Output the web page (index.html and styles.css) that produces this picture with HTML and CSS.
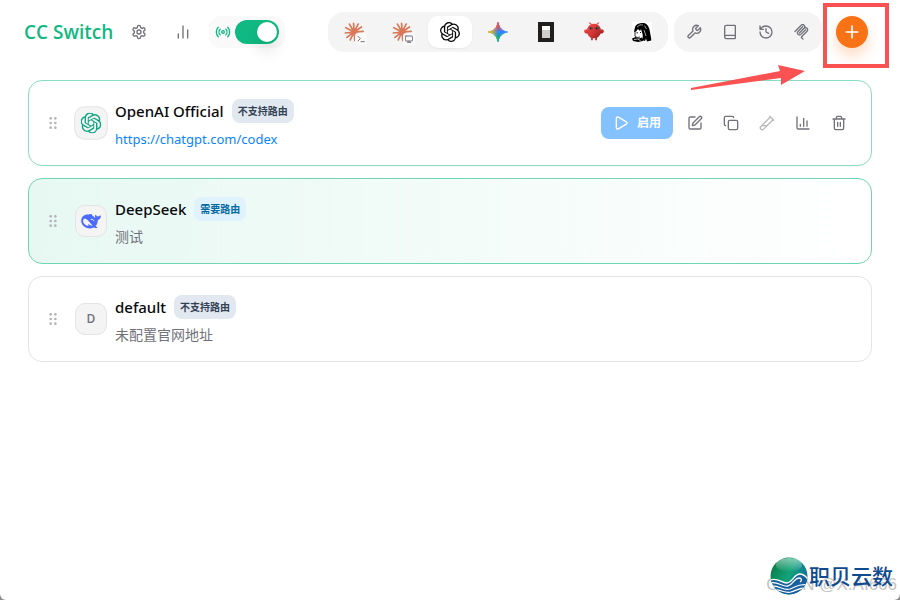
FILE: index.html
```html
<!DOCTYPE html>
<html lang="zh-CN">
<head>
<meta charset="utf-8">
<meta name="viewport" content="width=device-width, initial-scale=1">
<title>CC Switch</title>
<link rel="stylesheet" href="styles.css">
</head>
<body>
<svg class="sprite" aria-hidden="true">
  <symbol id="openai" viewBox="0 0 24 24"><path fill="currentColor" d="M22.2819 9.8211a5.9847 5.9847 0 0 0-.5157-4.9108 6.0462 6.0462 0 0 0-6.5098-2.9A6.0651 6.0651 0 0 0 4.9807 4.1818a5.9847 5.9847 0 0 0-3.9977 2.9 6.0462 6.0462 0 0 0 .7427 7.0966 5.98 5.98 0 0 0 .511 4.9107 6.051 6.051 0 0 0 6.5146 2.9001A5.9847 5.9847 0 0 0 13.2599 24a6.0557 6.0557 0 0 0 5.7718-4.2058 5.9894 5.9894 0 0 0 3.9977-2.9001 6.0557 6.0557 0 0 0-.7475-7.0729zm-9.022 12.6081a4.4755 4.4755 0 0 1-2.8764-1.0408l.1419-.0804 4.7783-2.7582a.7948.7948 0 0 0 .3927-.6813v-6.7369l2.02 1.1686a.071.071 0 0 1 .038.052v5.5826a4.504 4.504 0 0 1-4.4945 4.4944zm-9.6607-4.1254a4.4708 4.4708 0 0 1-.5346-3.0137l.142.0852 4.783 2.7582a.7712.7712 0 0 0 .7806 0l5.8428-3.3685v2.3324a.0804.0804 0 0 1-.0332.0615L9.74 19.9502a4.4992 4.4992 0 0 1-6.1408-1.6464zM2.3408 7.8956a4.485 4.485 0 0 1 2.3655-1.9728V11.6a.7664.7664 0 0 0 .3879.6765l5.8144 3.3543-2.0201 1.1685a.0757.0757 0 0 1-.071 0l-4.8303-2.7865A4.504 4.504 0 0 1 2.3408 7.872zm16.5963 3.8558L13.1038 8.364 15.1192 7.2a.0757.0757 0 0 1 .071 0l4.8303 2.7913a4.4944 4.4944 0 0 1-.6765 8.1042v-5.6772a.79.79 0 0 0-.407-.667zm2.0107-3.0231l-.142-.0852-4.7735-2.7818a.7759.7759 0 0 0-.7854 0L9.409 9.2297V6.8974a.0662.0662 0 0 1 .0284-.0615l4.8303-2.7866a4.4992 4.4992 0 0 1 6.6802 4.66zM8.3065 12.863l-2.02-1.1638a.0804.0804 0 0 1-.038-.0567V6.0742a4.4992 4.4992 0 0 1 7.3757-3.4537l-.142.0805L8.704 5.459a.7948.7948 0 0 0-.3927.6813zm1.0976-2.3654l2.602-1.4998 2.6069 1.4998v2.9994l-2.5974 1.4997-2.6067-1.4997Z"/></symbol>
  <symbol id="burst" viewBox="0 0 24 24"><path fill="none" stroke="#d97757" stroke-width="2" stroke-linecap="round" d="M12 12 11.500 1.500M12 12 17 2.500M12 12 21 6M12 12 23 11.200M12 12 22 16M12 12 18.500 20M12 12 13 22.500M12 12 7.500 21.500M12 12 3.500 18.500M12 12 1.500 13.200M12 12 2.200 6.800M12 12 6.500 2.500"/><circle cx="12" cy="12" r="3.800" fill="#d97757"/></symbol>
  <symbol id="grip" viewBox="0 0 24 24"><g fill="currentColor"><circle cx="8.500" cy="5" r="2"/><circle cx="8.500" cy="12" r="2"/><circle cx="8.500" cy="19" r="2"/><circle cx="15.500" cy="5" r="2"/><circle cx="15.500" cy="12" r="2"/><circle cx="15.500" cy="19" r="2"/></g></symbol>
</svg>
<div class="window">
  <header class="topbar">
    <div class="brand">
      <h1>CC Switch</h1>
      <button class="icon-btn settings" aria-label="设置"><svg class="line" viewBox="0 0 24 24"><path d="M12.22 2h-.44a2 2 0 0 0-2 2v.18a2 2 0 0 1-1 1.73l-.43.25a2 2 0 0 1-2 0l-.15-.08a2 2 0 0 0-2.73.73l-.22.38a2 2 0 0 0 .73 2.73l.15.1a2 2 0 0 1 1 1.72v.51a2 2 0 0 1-1 1.74l-.15.09a2 2 0 0 0-.73 2.73l.22.38a2 2 0 0 0 2.73.73l.15-.08a2 2 0 0 1 2 0l.43.25a2 2 0 0 1 1 1.73V20a2 2 0 0 0 2 2h.44a2 2 0 0 0 2-2v-.18a2 2 0 0 1 1-1.73l.43-.25a2 2 0 0 1 2 0l.15.08a2 2 0 0 0 2.73-.73l.22-.39a2 2 0 0 0-.73-2.73l-.15-.08a2 2 0 0 1-1-1.74v-.5a2 2 0 0 1 1-1.74l.15-.09a2 2 0 0 0 .73-2.73l-.22-.38a2 2 0 0 0-2.73-.73l-.15.08a2 2 0 0 1-2 0l-.43-.25a2 2 0 0 1-1-1.73V4a2 2 0 0 0-2-2z"/><circle cx="12" cy="12" r="3"/></svg></button>
      <button class="icon-btn" aria-label="统计"><svg class="line" viewBox="0 0 24 24"><path d="M5 21v-6M12 21V3M19 21V9"/></svg></button>
      <label class="proxy">
        <svg class="line" viewBox="0 0 24 24"><path d="M16.247 7.761a6 6 0 0 1 0 8.478M19.075 4.933a10 10 0 0 1 0 14.134M4.925 19.067a10 10 0 0 1 0-14.134M7.753 16.239a6 6 0 0 1 0-8.478"/><circle cx="12" cy="12" r="2"/></svg>
        <input type="checkbox" role="switch" aria-label="代理" checked>
      </label>
    </div>
    <div class="actions">
      <nav class="group apps">
        <button class="app" aria-label="Claude Code"><svg viewBox="0 0 24 24"><use href="#burst"/></svg><svg class="mini line" viewBox="0 0 24 24"><path d="m3 18 7-7-7-7M12 20h10"/></svg></button>
        <button class="app" aria-label="Claude Desktop"><svg viewBox="0 0 24 24"><use href="#burst"/></svg><svg class="mini line" viewBox="0 0 24 24"><rect x="1" y="3" width="22" height="15" rx="2"/><path d="M7 22h10M12 18v4"/></svg></button>
        <button class="app active" aria-label="Codex"><svg viewBox="0 0 24 24"><use href="#openai"/></svg></button>
        <button class="app" aria-label="Gemini"><svg viewBox="0 0 24 24">
          <defs>
            <linearGradient id="gem-y" x1="0" y1="0" x2=".5" y2="0"><stop offset=".15" stop-color="#fabc12"/><stop offset="1" stop-color="#fabc12" stop-opacity="0"/></linearGradient>
            <linearGradient id="gem-r" x1=".5" y1="0" x2=".55" y2=".5"><stop offset=".3" stop-color="#f94543"/><stop offset="1" stop-color="#f94543" stop-opacity="0"/></linearGradient>
            <linearGradient id="gem-g" x1=".5" y1="1" x2=".55" y2=".5"><stop offset=".2" stop-color="#08b962"/><stop offset="1" stop-color="#08b962" stop-opacity="0"/></linearGradient>
            <path id="spark" d="M12 .5C13.200 7 17 10.800 23.500 12 17 13.200 13.200 17 12 23.500 10.800 17 7 13.200.5 12 7 10.800 10.800 7 12 .5z"/>
          </defs>
          <use href="#spark" fill="#3186ff" stroke="#3186ff"/>
          <use href="#spark" fill="url(#gem-g)" stroke="url(#gem-g)"/>
          <use href="#spark" fill="url(#gem-r)" stroke="url(#gem-r)"/>
          <use href="#spark" fill="url(#gem-y)" stroke="url(#gem-y)"/>
        </svg></button>
        <button class="app" aria-label="OpenCode"><svg viewBox="0 0 20 20"><path fill="#211e1e" d="M2 0h16v20H2z"/><path fill="#fff" d="M6 4h8v4H6z"/><path fill="#cfcecd" d="M6 8h8v8H6z"/></svg></button>
        <button class="app" aria-label="OpenClaw"><svg viewBox="0 0 24 24">
          <defs><linearGradient id="claw" x1="0" y1="0" x2="1" y2="1"><stop stop-color="#ff4d4d"/><stop offset="1" stop-color="#991b1b"/></linearGradient></defs>
          <g fill="url(#claw)"><path d="M12 2c-5.500 0-8.500 4.500-8.500 8.500 0 4 2.500 7.500 5 8.500v3h2v-2.500h3V22h2v-3c2.500-1 5-4.500 5-8.500C20.500 6.500 17.500 2 12 2z"/><path d="M5 9.500c-2.500-1.500-5-.5-4.800 1.800.3 2.400 3.300 3.200 5.300 1.700zM19 9.500c2.500-1.500 5-.5 4.800 1.800-.3 2.400-3.300 3.200-5.300 1.700z"/></g>
          <path d="M9 3 6.500 1M15 3l2.500-2" stroke="#f04848" stroke-width="1.300" stroke-linecap="round"/>
          <circle cx="8.500" cy="7.500" r="1.600" fill="#202a32"/><circle cx="15.500" cy="7.500" r="1.600" fill="#202a32"/><circle cx="9" cy="7.200" r=".6" fill="#00d6c0"/><circle cx="16" cy="7.200" r=".6" fill="#00d6c0"/>
        </svg></button>
        <button class="app" aria-label="Hermes"><svg viewBox="0 0 20 20">
          <path fill="#fff" d="M0 0h20v20H0z"/>
          <path d="M3 5C4 2 8 .5 12 1c4 1 5.500 5 6 9 .3 3 1.300 5 1.300 8.500L15 19.500l-1-3-1 2.500-3.500-1c1.500-2 1.500-4 1-6L9 7 8 9 6 7 4 9.500 2 10z"/>
          <path d="M0 16.500 3.500 15l3.500 1.500 3-1 1 3.500-5 1-5-1z"/>
          <path d="M3 9v5l2 1.500 3-.5" fill="none" stroke="#000" stroke-width=".8"/>
          <path d="m5 5 3-2.200 3 .2M12.500 3.500l2 3.500M12 8l2 6" stroke="#ddd" stroke-width=".7" fill="none"/><path d="m2 17.500 3.500-.5 3 1.500" stroke="#fff" stroke-width=".7" fill="none"/>
          <path d="M4.500 10.800h1.500M8 10.500h1" stroke="#000" stroke-width=".9"/>
        </svg></button>
      </nav>
      <div class="group tools">
        <button class="icon-btn" aria-label="技能"><svg class="line" viewBox="0 0 24 24"><path d="M14.700 6.300a1 1 0 0 0 0 1.400l1.600 1.600a1 1 0 0 0 1.400 0l3.770-3.770a6 6 0 0 1-7.940 7.940l-6.910 6.910a2.120 2.120 0 0 1-3-3l6.910-6.910a6 6 0 0 1 7.940-7.940z"/></svg></button>
        <button class="icon-btn" aria-label="提示词"><svg class="line" viewBox="0 0 24 24"><path d="M4 19.500v-15A2.500 2.500 0 0 1 6.500 2H19a1 1 0 0 1 1 1v18a1 1 0 0 1-1 1H6.500a1 1 0 0 1 0-5H20"/></svg></button>
        <button class="icon-btn" aria-label="会话历史"><svg class="line" viewBox="0 0 24 24"><path d="M3 12a9 9 0 1 0 9-9 9.750 9.750 0 0 0-6.740 2.740L3 8M3 3v5h5M12 7v5l4 2"/></svg></button>
        <button class="icon-btn" aria-label="MCP"><svg class="line mcp" viewBox="0 0 24 24"><path d="m1.500 11.300 9.300-9.300a3.100 3.100 0 0 1 4.400 4.400l-7 7 7-7a3.100 3.100 0 0 1 4.400 4.400l-8.200 8.200a1 1 0 0 0 0 1.500l1.900 1.900M13 4.200l-7 7a3.100 3.100 0 0 0 4.400 4.400l7-7"/></svg></button>
      </div>
      <button class="add" aria-label="添加供应商"><svg class="line" viewBox="0 0 24 24"><path d="M5 12h14M12 5v14"/></svg></button>
    </div>
  </header>

  <main class="list">
    <article class="card hovered">
      <svg class="grip" viewBox="0 0 24 24"><use href="#grip"/></svg>
      <div class="avatar green"><svg viewBox="0 0 24 24"><use href="#openai"/></svg></div>
      <div class="info">
        <div class="name"><h2>OpenAI Official</h2><span class="badge">不支持路由</span></div>
        <a href="https://chatgpt.com/codex">https://chatgpt.com/codex</a>
      </div>
      <div class="ops">
        <button class="enable"><svg class="line" viewBox="0 0 24 24"><path d="M5 5a2 2 0 0 1 3.008-1.728l11.997 6.998a2 2 0 0 1 .003 3.458l-12 7A2 2 0 0 1 5 19z"/></svg>启用</button>
        <button class="icon-btn" aria-label="编辑"><svg class="line" viewBox="0 0 24 24"><path d="M12 3H5a2 2 0 0 0-2 2v14a2 2 0 0 0 2 2h14a2 2 0 0 0 2-2v-7"/><path d="M18.375 2.625a1 1 0 0 1 3 3l-9.013 9.014a2 2 0 0 1-.853.505l-2.873.84a.5.500 0 0 1-.62-.62l.84-2.873a2 2 0 0 1 .506-.852z"/></svg></button>
        <button class="icon-btn" aria-label="复制"><svg class="line" viewBox="0 0 24 24"><rect x="8" y="8" width="14" height="14" rx="2"/><path d="M4 16c-1.100 0-2-.9-2-2V4c0-1.100.9-2 2-2h10c1.100 0 2 .9 2 2"/></svg></button>
        <button class="icon-btn" aria-label="测试" disabled><svg class="line" viewBox="0 0 24 24"><path d="M21 7 6.820 21.180a2.830 2.830 0 0 1-3.990-.01 2.830 2.830 0 0 1 0-4L17 3M16 2l6 6M12 16H4"/></svg></button>
        <button class="icon-btn" aria-label="用量"><svg class="line" viewBox="0 0 24 24"><path d="M3 3v16a2 2 0 0 0 2 2h16M8 17v-3M13 17V5M18 17V9"/></svg></button>
        <button class="icon-btn" aria-label="删除"><svg class="line" viewBox="0 0 24 24"><path d="M3 6h18M19 6v14a2 2 0 0 1-2 2H7a2 2 0 0 1-2-2V6M8 6V4a2 2 0 0 1 2-2h4a2 2 0 0 1 2 2v2M10 11v6M14 11v6"/></svg></button>
      </div>
    </article>
    <article class="card current">
      <svg class="grip" viewBox="0 0 24 24"><use href="#grip"/></svg>
      <div class="avatar"><svg viewBox="0 0 24 24"><path fill="#4d6bfe" d="M.3 10.500C1 6 5 3.800 9 4.200c1.500-.2 2.400-.9 3.600-.6.900.3.300 1.400.9 1.900 1.500.6 2.200 2 3.300 2.600.5-.8-.3-1.900.3-3.100.4-.8 1-.4 1.300.3.600 1.200 1.600 1.500 2.700 1 .9-.4 1.700-1.200 2.600-1 .5 2.600-.9 4.900-3.400 5.500-.3 3.200-1 5.500-2.800 7.400.8.500 1.900.7 2.400 1.500-1.500.9-3.200.9-4.800.2-3.200 1.600-7.500 1.500-10.500-.6C1.500 17.300-.2 14 .3 10.500z"/><path fill="#f4f4f5" d="M2.500 11.500c.3-1.900 1.300-2.600 2.900-2.200 3.300.9 4.500 4.400 8 7.700.4.500 0 .8-.6.700-1.900-.3-2.800-1.400-4-2-.5.800.4 1.600 0 2.300-3.700-.5-6.500-3.300-6.300-6.500z"/><path fill="none" stroke="#f4f4f5" stroke-width="1.200" d="M11.800 10.200c1.900-.8 3.200.3 3.700 1.900"/></svg></div>
      <div class="info">
        <div class="name"><h2>DeepSeek</h2><span class="badge sky">需要路由</span></div>
        <p>测试</p>
      </div>
    </article>
    <article class="card">
      <svg class="grip" viewBox="0 0 24 24"><use href="#grip"/></svg>
      <div class="avatar">D</div>
      <div class="info">
        <div class="name"><h2>default</h2><span class="badge">不支持路由</span></div>
        <p>未配置官网地址</p>
      </div>
    </article>
  </main>

  <svg class="callout" viewBox="0 0 220 100" aria-hidden="true"><path fill="#fa5252" d="m11 88 89-17-2-6 27 6-24 14v-7L11 90z"/><rect x="145" y="5" width="62" height="61" fill="none" stroke="#fa5252" stroke-width="4"/></svg>

  <footer class="watermark">
    <span class="source">CSDN @X.AI666</span>
    <svg viewBox="0 0 38 38" aria-hidden="true">
      <defs><linearGradient id="globe" x1="0" y1=".2" x2="1" y2=".7"><stop stop-color="#087a43"/><stop offset=".5" stop-color="#12a37a"/><stop offset="1" stop-color="#1266a4"/></linearGradient><linearGradient id="shine" x1="0" y1="0" x2="0" y2="1"><stop stop-color="#fff" stop-opacity=".5"/><stop offset="1" stop-color="#fff" stop-opacity="0"/></linearGradient><clipPath id="disc"><circle cx="19" cy="19" r="18.500"/></clipPath></defs>
      <g clip-path="url(#disc)"><path fill="url(#globe)" d="M0 0h38v38H0z"/><ellipse cx="19" cy="8" rx="13" ry="7" fill="url(#shine)"/>
      <path fill="#1860a0" d="M0 24c7-4 11 1 17 2 7 0 7-8 13-9 4 0 7 3 8 5v16H0z"/>
      <g fill="none" stroke="#fff" stroke-width="1.300"><path d="M0 23c8-3 11 3 17 3 6-1 7-9 13-9 4 0 6 3 8 5"/><path d="M0 26c8-2 12 4 18 3 6-2 6-8 11-8 3 0 3 3 1 4"/><path d="M1 29c8-1 12 5 19 3 6-2 9-6 18-4"/><path d="M4 33c7-1 11 4 17 2 6-2 8-4 15-4"/></g></g>
    </svg>
    <strong>职贝云数</strong>
  </footer>
</div>
</body>
</html>
```
FILE: styles.css
```css
* { box-sizing: border-box; }
html { background: #8a8a8a; }
body {
  margin: 0;
  font-family: "Open Sans", "Noto Sans CJK SC", sans-serif;
  font-size: 14px;
  line-height: 20px;
  color: #09090b;
}
h1, h2, p { margin: 0; }
button { border: 0; padding: 0; background: none; font: inherit; color: inherit; }
.sprite { display: none; }
.window {
  position: relative;
  min-height: 100vh;
  display: flex;
  flex-direction: column;
  background: #fff;
  border-radius: 0 0 6px 6px;
}
.line { fill: none; stroke: currentColor; stroke-width: 2; stroke-linecap: round; stroke-linejoin: round; }

.topbar {
  height: 64px;
  padding: 0 32px 0 24px;
  display: flex;
  align-items: center;
  justify-content: space-between;
}
.brand, .actions, .group, .ops, .name { display: flex; align-items: center; }
h1 { font-size: 19px; line-height: 28px; font-weight: 600; color: #10b981; }
.icon-btn {
  width: 32px;
  height: 32px;
  display: grid;
  place-items: center;
  border-radius: 8px;
  color: #71717a;
}
.icon-btn svg { width: 16px; height: 16px; }
.icon-btn:disabled { opacity: .5; }
.settings { margin: 0 12px 0 10px; }
.proxy {
  margin-left: 10px;
  height: 32px;
  padding: 0 6px;
  display: flex;
  align-items: center;
  gap: 4px;
  border-radius: 12px;
  background: #f9f9fa;
  color: #10b981;
}
.proxy svg { width: 16px; height: 16px; }
.proxy input {
  appearance: none;
  margin: 0;
  width: 44px;
  height: 24px;
  padding: 2px;
  display: flex;
  justify-content: flex-end;
  border-radius: 12px;
  background: #10b981;
}
.proxy input::before {
  content: "";
  width: 20px;
  height: 20px;
  border-radius: 50%;
  background: #fff;
  box-shadow: 0 10px 15px rgba(0, 0, 0, .1);
}
.group { gap: 4px; padding: 4px; border-radius: 16px; background: #f4f4f5; }
.app {
  position: relative;
  width: 44px;
  height: 32px;
  display: grid;
  place-items: center;
  border-radius: 10px;
}
.app > svg { width: 20px; height: 20px; }
.app.active { background: #fff; box-shadow: 0 1px 2px rgba(0, 0, 0, .06); }
.app > .mini {
  position: absolute;
  right: 9px;
  bottom: 3px;
  width: 12px;
  height: 12px;
  padding: 2px;
  border-radius: 3px;
  background: #fafafa;
  color: #71717a;
  stroke-width: 3;
}
.apps, .tools { height: 40px; }
.tools { margin-left: 6px; }
.add {
  margin-left: 14px;
  width: 32px;
  height: 32px;
  display: grid;
  place-items: center;
  border-radius: 50%;
  background: #f97316;
  color: #fff;
  box-shadow: 0 8px 14px rgba(249, 115, 22, .25);
}
.add svg { width: 20px; height: 20px; }

.list { flex: 1; padding: 16px 28px; display: flex; flex-direction: column; gap: 12px; }
.card {
  display: flex;
  align-items: center;
  padding: 16px;
  border: 1px solid #e4e4e7;
  border-radius: 14px;
}
.hovered { border-color: #8adcc0; box-shadow: 0 1px 2px rgba(0, 0, 0, .03); }
.current { border-color: #70d5b3; background: linear-gradient(90deg, #e7f8f2, #fff); }
.grip { width: 16px; height: 16px; color: #b4b4b9; }
.avatar {
  width: 32px;
  height: 32px;
  margin: 0 8px 0 14px;
  display: grid;
  place-items: center;
  border: 1px solid #e4e4e7;
  border-radius: 10px;
  background: #f4f4f5;
  color: #71717a;
  font-size: 12px;
  font-weight: 600;
}
.avatar svg { width: 20px; height: 20px; }
.hovered .avatar { transform: scale(1.05); }
.green { color: #10a37f; }
.info { flex: 1; }
.info p, .info a { display: block; margin-top: 4px; color: #71717a; }
.info h2, .info a { font-family: "Noto Sans", sans-serif; }
.info a { width: fit-content; font-size: 13px; color: #0a84ff; text-decoration: none; }
.name { gap: 8px; height: 28px; }
h2 { font-size: 15px; line-height: 24px; font-weight: 500; }
.badge {
  padding: 0 6px;
  height: 24px;
  line-height: 24px;
  border-radius: 8px;
  background: #e2e8f0;
  color: #334155;
  font-size: 10px;
  font-weight: 700;
}
.sky { background: #e0f2fe; color: #0369a1; }
.ops { gap: 4px; }
.enable {
  width: 72px;
  height: 32px;
  margin-right: 2px;
  display: flex;
  align-items: center;
  justify-content: center;
  gap: 8px;
  border-radius: 8px;
  background: #84c1ff;
  color: #fff;
  font-size: 12px;
  font-weight: 700;
}
.enable svg { width: 16px; height: 16px; }

.callout { position: absolute; top: 0; right: 0; width: 220px; height: 100px; pointer-events: none; }
.watermark {
  position: absolute;
  right: 7px;
  bottom: 5px;
  display: flex;
  align-items: center;
  gap: 1px;
}
.watermark svg { position: relative; width: 38px; height: 38px; }
.watermark strong { position: relative; font-size: 21px; line-height: 32px; font-weight: 500; color: #104a8e; }
.source {
  position: absolute;
  right: -4px;
  bottom: 0;
  font-family: "Liberation Sans", sans-serif;
  font-size: 17px;
  color: #c4c4c4;
  white-space: nowrap;
}
```
